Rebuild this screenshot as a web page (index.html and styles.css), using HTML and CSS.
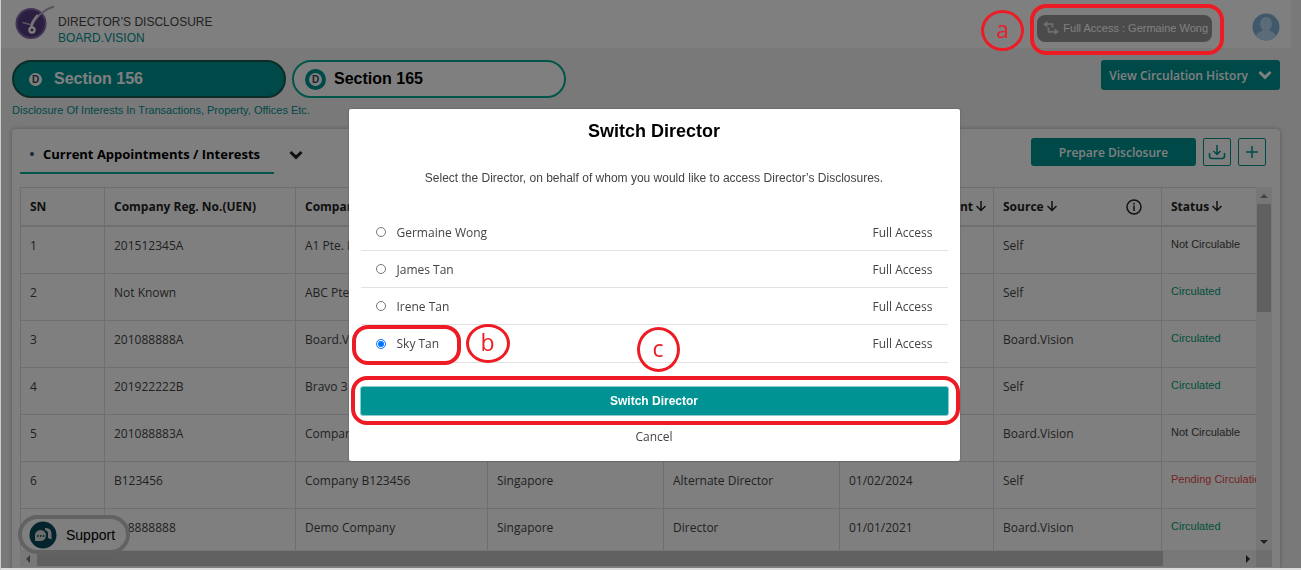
FILE: index.html
```html
<!DOCTYPE html>
<html lang="en">
<head>
<meta charset="utf-8">
<title>Director's Disclosure</title>
<link rel="stylesheet" href="styles.css">
</head>
<body>
<div class="app">
  <header class="topbar">
    <svg class="logo" viewBox="0 0 42 36" width="42" height="36">
      <circle cx="18" cy="18.500" r="15.500" fill="#8468a6"/>
      <circle cx="18" cy="18.500" r="13.500" fill="#553c82"/>
      <path d="M41 1.500C32 4 23 11 18.500 21" fill="none" stroke="#b4a6c6" stroke-width="2"/>
      <path d="M9.500 17.500L19 20" stroke="#b4a6c6" stroke-width="1.500"/>
      <path d="M25 10C21 14 18.500 18 18.200 23" fill="none" stroke="#e8e2ee" stroke-width="2.600"/>
      <circle cx="19" cy="25" r="2.600" fill="none" stroke="#fff" stroke-width="2.200"/>
    </svg>
    <div class="brand"><span>DIRECTOR’S DISCLOSURE</span><span class="brand-sub">BOARD.VISION</span></div>
    <button class="access" type="button">
      <svg viewBox="0 0 16 14" width="16" height="14" fill="none" stroke="#ddd" stroke-width="1.800"><path d="M3 3.200H9.500V6.500M5.500 6.500V10.800H13"/><path d="M4.500 0L0 3.200L4.500 6.400ZM11.500 7.600L16 10.800L11.500 14Z" fill="#ddd" stroke="none"/></svg>
      Full Access : Germaine Wong
    </button>
    <svg class="avatar" viewBox="0 0 28 28" width="28" height="28">
      <circle cx="14" cy="14" r="13.500" fill="#7fb2d6"/>
      <path d="M4 23C5 19 9 18.500 11 17.500C6 12 8 4 14 4S22 12 17 17.500C19 18.500 23 19 24 23A13.500 13.500 0 0 1 4 23Z" fill="#b4d8f0"/>
    </svg>
  </header>
  <main class="page">
    <div class="tabs">
      <button class="tab tab-active" type="button"><span class="dot">D</span>Section 156</button>
      <button class="tab" type="button"><span class="dot">D</span>Section 165</button>
      <button class="history" type="button">View Circulation History
        <svg viewBox="0 0 14 10" width="14" height="10" fill="none" stroke="currentColor" stroke-width="3"><path d="M1.500 2L7 7.300L12.500 2"/></svg></button>
    </div>
    <p class="caption">Disclosure Of Interests In Transactions, Property, Offices Etc.</p>
    <section class="card">
      <div class="card-head">
        <h2 class="card-title"><span class="bullet"></span>Current Appointments / Interests</h2>
        <svg class="title-arrow" viewBox="0 0 14 10" width="14" height="10" fill="none" stroke="#222" stroke-width="3"><path d="M1.500 2L7 7.300L12.500 2"/></svg>
        <button class="prepare" type="button">Prepare Disclosure</button>
        <button class="square" type="button" aria-label="Download"><svg viewBox="0 0 18 18" width="18" height="18" fill="none" stroke="currentColor" stroke-width="1.500"><path d="M9 2V11.500M5.500 8L9 11.500L12.500 8M1.500 10V13Q1.500 15.500 4 15.500H14Q16.500 15.500 16.500 13V10"/></svg></button>
        <button class="square" type="button" aria-label="Add"><svg viewBox="0 0 18 18" width="18" height="18" fill="none" stroke="currentColor" stroke-width="1.500"><path d="M9 3V15M3 9H15"/></svg></button>
      </div>
      <div class="grid-area">
        <div class="table-clip">
          <table class="grid">
            <colgroup><col class="c-sn"><col class="c-reg"><col class="c-std"><col class="c-mid"><col class="c-mid"><col class="c-date"><col class="c-src"><col></colgroup>
            <thead><tr><th>SN</th><th>Company Reg. No.(UEN)</th><th>Company</th><th></th><th></th><th class="end">Appointment<svg class="sort" viewBox="0 0 12 12" width="12" height="12"><path d="M6 1V10.500M1.500 6L6 10.500L10.500 6"/></svg></th><th><div class="source-head"><span>Source<svg class="sort" viewBox="0 0 12 12" width="12" height="12"><path d="M6 1V10.500M1.500 6L6 10.500L10.500 6"/></svg></span><svg viewBox="0 0 16 16" width="16" height="16" fill="none" stroke="#222" stroke-width="1.500"><circle cx="8" cy="8" r="7"/><path d="M8 6.500V12M8 3.800V5.400"/></svg></div></th><th>Status<svg class="sort" viewBox="0 0 12 12" width="12" height="12"><path d="M6 1V10.500M1.500 6L6 10.500L10.500 6"/></svg></th></tr></thead>
            <tbody>
              <tr><td>1</td><td>201512345A</td><td>A1 Pte. Ltd.</td><td></td><td></td><td></td><td>Self</td><td class="status">Not Circulable</td></tr>
              <tr><td>2</td><td>Not Known</td><td>ABC Pte.</td><td></td><td></td><td></td><td>Self</td><td class="status ok">Circulated</td></tr>
              <tr><td>3</td><td>201088888A</td><td>Board.Vision</td><td></td><td></td><td></td><td>Board.Vision</td><td class="status ok">Circulated</td></tr>
              <tr><td>4</td><td>201922222B</td><td>Bravo 3</td><td></td><td></td><td></td><td>Self</td><td class="status ok">Circulated</td></tr>
              <tr><td>5</td><td>201088883A</td><td>Company</td><td></td><td></td><td></td><td>Board.Vision</td><td class="status">Not Circulable</td></tr>
              <tr><td>6</td><td>B123456</td><td>Company B123456</td><td>Singapore</td><td>Alternate Director</td><td>01/02/2024</td><td>Self</td><td class="status bad">Pending Circulation</td></tr>
              <tr><td>7</td><td>888888888</td><td>Demo Company</td><td>Singapore</td><td>Director</td><td>01/01/2021</td><td>Board.Vision</td><td class="status ok">Circulated</td></tr>
            </tbody>
          </table>
        </div>
        <div class="vbar"><i class="arrow up"></i><i class="vthumb"></i><i class="arrow down"></i></div>
        <div class="hbar"><i class="arrow left"></i><i class="hthumb"></i><i class="arrow right"></i></div>
        <div class="corner"></div>
      </div>
    </section>
  </main>
  <button class="support" type="button">
    <svg viewBox="0 0 28 28" width="28" height="28"><circle cx="14" cy="14" r="13.500" fill="#06495a"/><path d="M16 7Q22.500 6.500 22.500 13V18.500L19 17V12.500Q19 9.500 16 9Z" fill="#ddd"/><path d="M6 20V14.500A5.500 5.500 0 1 1 11.500 20Z" fill="#ddd"/><g fill="#06495a"><circle cx="9" cy="15" r=".9"/><circle cx="11.800" cy="15" r=".9"/><circle cx="14.600" cy="15" r=".9"/></g></svg>
    Support
  </button>
</div>
<div class="overlay">
  <form class="dialog" role="dialog" aria-labelledby="dialog-title">
    <h1 id="dialog-title">Switch Director</h1>
    <p>Select the Director, on behalf of whom you would like to access Director’s Disclosures.</p>
    <div class="options">
      <label class="option"><input type="radio" name="director"><span>Germaine Wong</span><span class="level">Full Access</span></label>
      <label class="option"><input type="radio" name="director"><span>James Tan</span><span class="level">Full Access</span></label>
      <label class="option"><input type="radio" name="director"><span>Irene Tan</span><span class="level">Full Access</span></label>
      <label class="option"><input type="radio" name="director" checked><span>Sky Tan</span><span class="level">Full Access</span></label>
    </div>
    <button class="submit" type="button">Switch Director</button>
    <button class="cancel" type="button">Cancel</button>
    <span class="mark box-b"></span><span class="mark box-c"></span>
    <span class="mark letter letter-b">b</span><span class="mark letter letter-c">c</span>
  </form>
</div>
<span class="mark box-a"></span><span class="mark letter letter-a">a</span>
</body>
</html>
```
FILE: styles.css
```css
* { box-sizing: border-box; }
body { margin: 0; height: 100vh; overflow: hidden; font-family: "Open Sans", "Noto Sans", sans-serif; font-size: 12px; color: #444; background: #ddd; border-left: 1px solid #ccc; }
button { font: inherit; cursor: pointer; }
svg { flex: none; }
.app { height: calc(100vh - 2px); overflow: hidden; background: #f2f2f2; display: flex; flex-direction: column; }

.topbar { height: 48px; flex: none; margin-right: 10px; padding: 0 11px 0 12px; background: #fff; display: flex; align-items: center; }
.logo { align-self: flex-start; margin-top: 5px; }
.brand { display: flex; flex-direction: column; margin: 12px auto 0 3px; font: 12px/16px "Liberation Sans", Arial, sans-serif; color: #444; }
.brand-sub { color: #009393; }
.access { display: flex; align-items: center; gap: 4px; height: 27px; margin: 8px 40px 0 0; padding: 0 4px 0 6px; border: 0; border-radius: 8px; background: #969696; color: #fff; font: 11px "Liberation Sans", Arial, sans-serif; white-space: nowrap; }
.avatar { margin-top: 5px; }

.page { flex: 1; min-height: 0; display: flex; flex-direction: column; padding: 12px 21px 0 11px; }
.tabs { display: flex; gap: 6px; flex: none; }
.tab { display: flex; align-items: center; gap: 8px; width: 274px; height: 38px; padding: 0 11px; border: 2px solid #00ad91; border-radius: 19px; background: #fff; color: #000; font: bold 16px "Liberation Sans", Arial, sans-serif; }
.tab-active { background: #009393; border-color: #17594f; color: #fff; }
.dot { display: flex; align-items: center; justify-content: center; width: 21px; height: 21px; border: 4px solid #009393; border-radius: 50%; background: #fff; color: #345; font-size: 10px; }
.history { align-self: flex-start; display: flex; align-items: center; gap: 10px; height: 30px; margin-left: auto; padding: 0 8px; border: 0; border-radius: 3px; background: #009393; color: #fff; font-weight: 600; white-space: nowrap; }
.caption { margin: 5px 0 12px; font: 11px/14px "Liberation Sans", Arial, sans-serif; color: #009393; flex: none; }

.card { flex: 1; min-height: 0; display: flex; flex-direction: column; padding: 9px 8px 0 8px; background: #fff; border-radius: 4px 4px 0 0; box-shadow: 0 0 4px #aaa; }
.card-head { display: flex; align-items: flex-start; gap: 7px; height: 49px; flex: none; margin-right: 6px; }
.card-title { display: flex; align-items: center; gap: 9px; width: 254px; height: 36px; margin: 0; padding: 0 0 3px 10px; border-bottom: 2px solid #00ad91; font-size: 13px; font-weight: 700; color: #000; white-space: nowrap; }
.bullet { width: 4px; height: 4px; border-radius: 50%; background: #357; }
.title-arrow { margin: 12px auto 0 8px; }
.prepare { width: 165px; height: 28px; border: 0; border-radius: 3px; background: #009393; color: #fff; font-weight: 600; }
.square { display: grid; place-items: center; width: 28px; height: 28px; padding: 0; background: none; border: 1px solid #009393; border-radius: 2px; color: #009393; }

.grid-area { flex: 1; min-height: 0; display: grid; grid-template-columns: 1fr 16px; grid-template-rows: 1fr 17px; margin-bottom: 1px; }
.table-clip { min-width: 0; overflow: hidden; border: solid #dedede; border-width: 1px 0 0 1px; }
.grid { width: 1272px; border-collapse: separate; border-spacing: 0; table-layout: fixed; }
.c-sn { width: 84px; } .c-reg { width: 191px; } .c-std { width: 192px; } .c-mid { width: 176px; } .c-date { width: 154px; } .c-src { width: 168px; }
.grid th, .grid td { padding: 0 9px; border: solid #dedede; border-width: 0 1px 1px 0; text-align: left; white-space: nowrap; }
.grid th { height: 39px; border-bottom-width: 2px; font-size: 12px; font-weight: 700; color: #222; }
.grid .end { text-align: right; padding-right: 6px; }
.grid td { height: 47px; padding-bottom: 10px; }
.grid .status { font: 11px "Liberation Sans", Arial, sans-serif; padding-bottom: 13px; }
.grid .ok { color: #00a077; } .grid .bad { color: #e94b4b; }
.sort { margin-left: 2px; fill: none; stroke: #222; stroke-width: 1.5; vertical-align: -1px; }
.source-head { display: flex; align-items: center; justify-content: space-between; padding-right: 10px; }
.vbar { display: flex; flex-direction: column; align-items: center; justify-content: space-between; padding: 7px 0 6px; background: #eee; }
.vthumb { width: 14px; height: 108px; margin: 6px 0 auto; background: #c1c1c1; }
.hbar { display: flex; align-items: center; gap: 7px; padding: 0 6px; background: #f1f1f1; }
.hthumb { width: 92%; height: 15px; margin-right: auto; background: #c1c1c1; }
.corner { background: #ddd; }
.arrow { width: 0; height: 0; flex: none; border: 4px solid transparent; }
.up { border-top: 0; border-bottom-color: #888; } .down { border-bottom: 0; border-top-color: #444; }
.left { border-left: 0; border-right-color: #777; } .right { border-right: 0; border-left-color: #333; }
.support { position: absolute; left: 18px; bottom: 16px; display: flex; align-items: center; gap: 9px; height: 39px; padding: 0 11px 0 7px; border: 4px solid #c4c4c4; border-radius: 20px; background: #fff; color: #000; font: 14px "Liberation Sans", Arial, sans-serif; }

.overlay { position: fixed; inset: 0 0 2px 1px; display: flex; align-items: flex-start; justify-content: center; padding: 109px 0 0 8px; background: rgba(0, 0, 0, .5); }
.overlay { padding-left: 6px; }
.dialog { position: relative; width: 47%; min-width: 611px; padding: 11px 11px 15px; background: #fff; border-radius: 2px; display: flex; flex-direction: column; box-shadow: 0 0 2px #555; }
.dialog h1 { margin: 0; font: bold 18px/22px "Liberation Sans", Arial, sans-serif; color: #000; text-align: center; }
.dialog p { margin: 28px 0; font: 12px/16px "Liberation Sans", Arial, sans-serif; text-align: center; }
.options { margin: 0 1px; }
.option { display: flex; align-items: center; height: 37px; padding: 0 15px; border-bottom: 1px solid #e2e2e2; }
.option:last-child { height: 38px; }
.option input { width: 10px; height: 10px; margin: 0 11px 0 0; accent-color: #0075ff; }
.level { margin-left: auto; }
.submit { height: 30px; margin-top: 23px; border: 1px solid #8cc; border-radius: 3px; background: #009393; color: #fff; font: bold 12px "Liberation Sans", Arial, sans-serif; }
.cancel { height: 20px; margin-top: 10px; align-self: center; padding: 0; border: 0; background: none; color: #444; }

.mark { position: absolute; border: 4px solid #ed1c24; pointer-events: none; }
.box-a { top: 4px; right: 77px; width: 194px; height: 51px; border-radius: 16px; }
.box-b { top: 216px; left: 3px; width: 109px; height: 40px; border-radius: 16px; }
.box-c { top: 267px; left: 2px; right: 0; height: 49px; border-radius: 16px; }
.letter { display: flex; align-items: center; justify-content: center; width: 43px; height: 41px; border-width: 3px; border-radius: 50%; color: #ed1c24; font-size: 23px; line-height: 1; padding-bottom: 3px; }
.letter-a { top: 10px; right: 277px; }
.letter-b { top: 215px; left: 117px; width: 44px; height: 39px; }
.letter-c { top: 218px; left: 288px; height: 45px; }
```
